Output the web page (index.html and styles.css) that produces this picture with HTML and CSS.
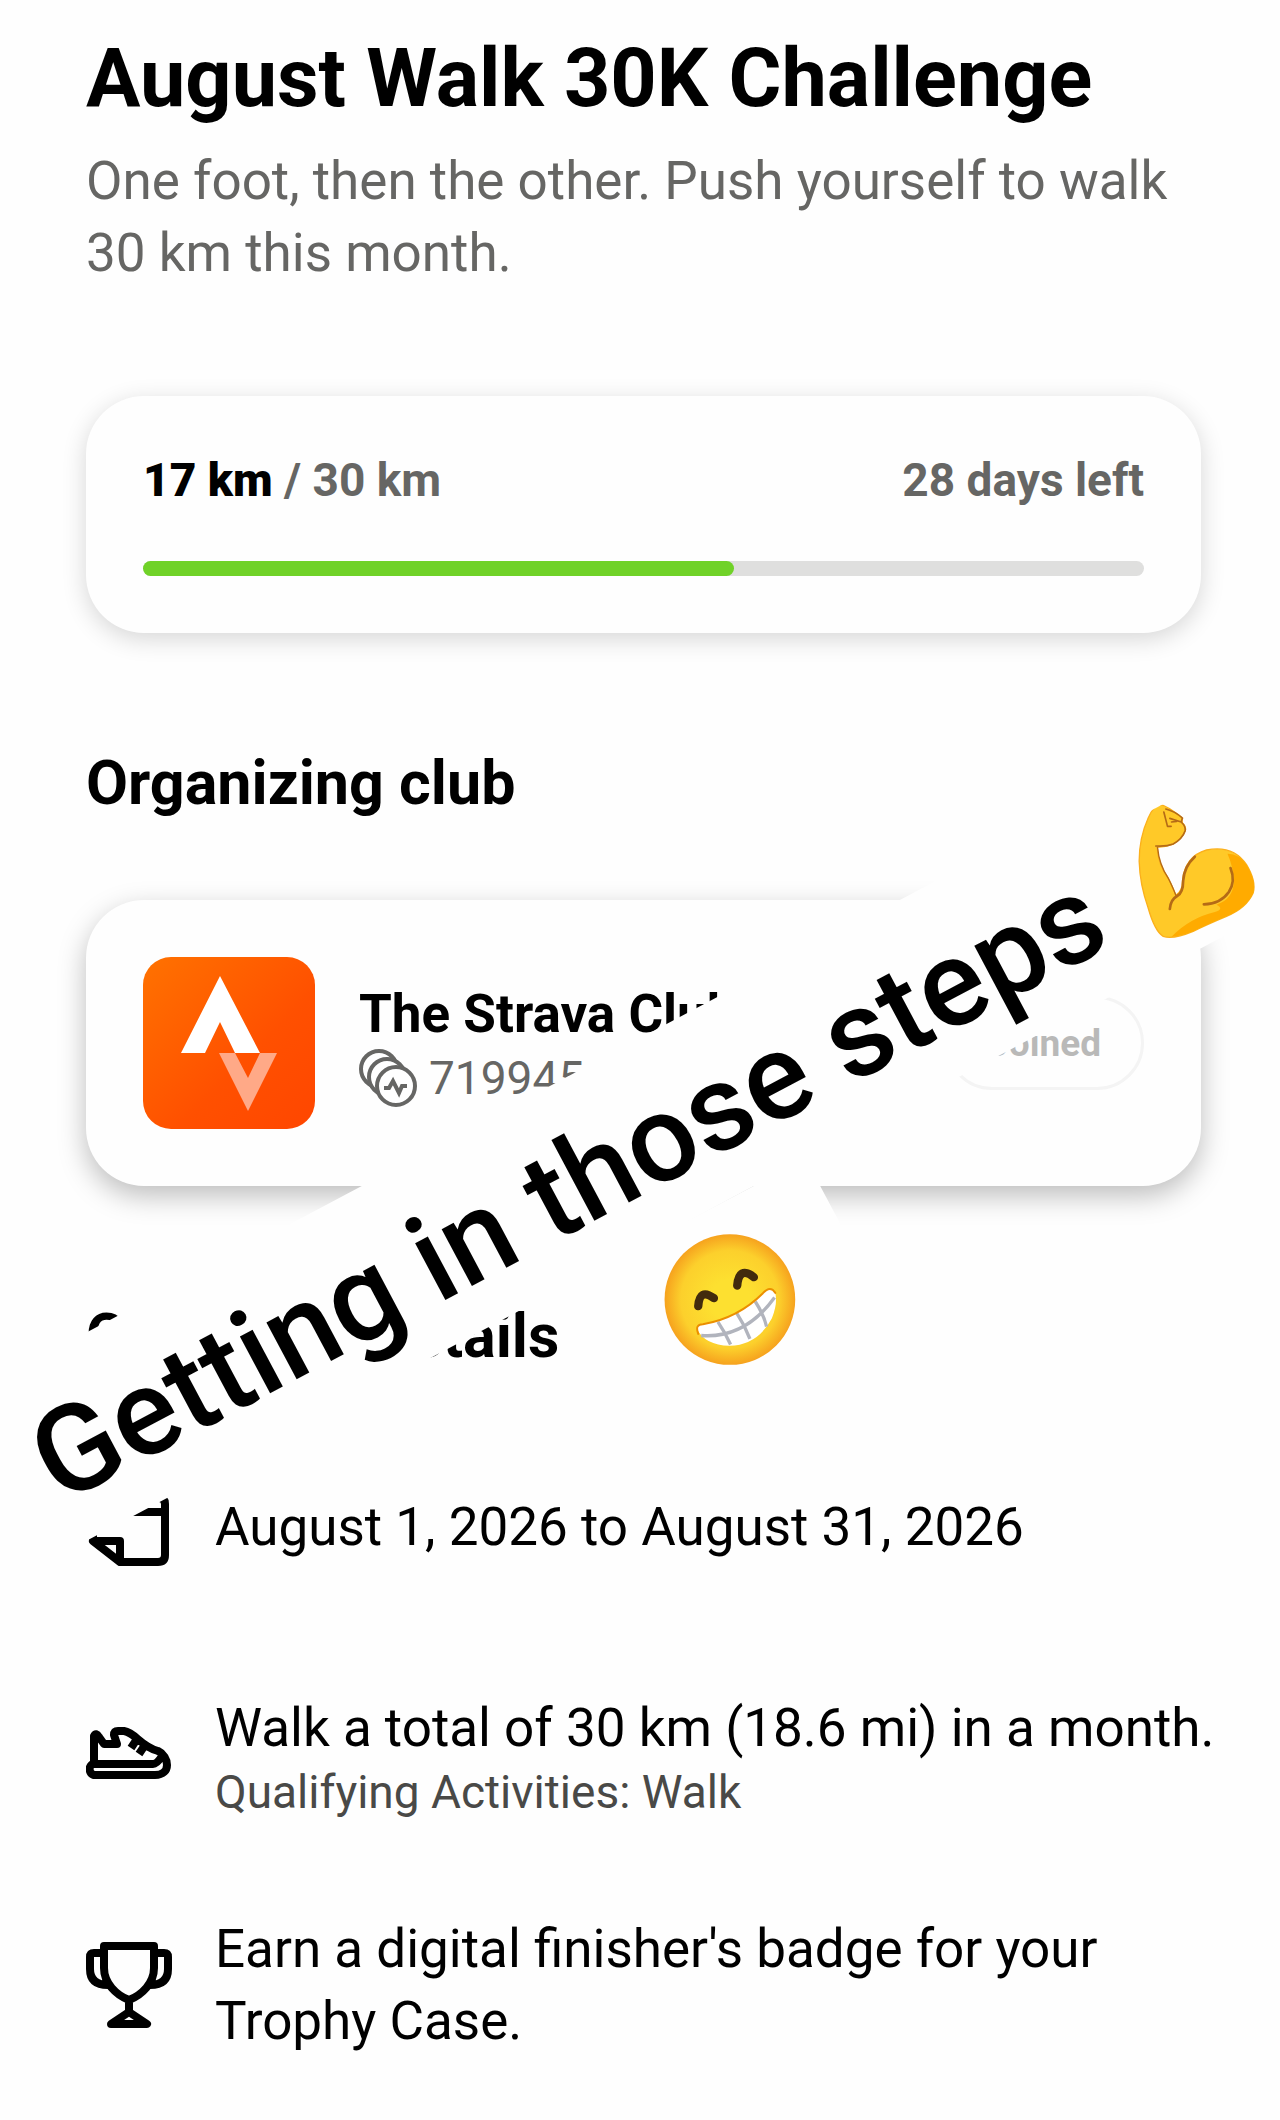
FILE: index.html
```html
<!DOCTYPE html>
<html lang="en">

<head>
    <meta charset="UTF-8">
    <meta name="viewport" content="width=device-width, initial-scale=1.0">
    <title>August Walk 30K Challenge</title>
    <link rel="stylesheet" href="styles.css">
</head>

<body>
    <main class="page">
        <h1>August Walk 30K Challenge</h1>
        <p class="intro">One foot, then the other. Push yourself to walk 30 km this month.</p>

        <section class="card progress-card">
            <div class="progress-text">
                <span><b>17 km</b> / 30 km</span>
                <span>28 days left</span>
            </div>
            <div class="bar">
                <div class="bar-fill" style="width: 59%"></div>
            </div>
        </section>

        <h2>Organizing club</h2>
        <section class="card club-card">
            <svg class="club-logo" viewBox="0 0 172 172">
                <defs>
                    <linearGradient id="orange" x1="0" y1="0" x2="1" y2="1">
                        <stop offset="0" stop-color="#ff7200" />
                        <stop offset="0.6" stop-color="#ff5000" />
                        <stop offset="1" stop-color="#ff4600" />
                    </linearGradient>
                </defs>
                <rect width="172" height="172" rx="28" fill="url(#orange)" />
                <path d="M77 19 117 96H92L77 65 62 96H38Z" fill="#fff" />
                <path d="M76 96H92L105 121 117 96H134L105 154Z" fill="#ffa987" />
            </svg>
            <div class="club-info">
                <div class="club-name">The Strava Club</div>
                <div class="club-count">
                    <svg class="members" viewBox="0 0 58 58">
                        <circle cx="20" cy="20" r="18" />
                        <circle cx="28" cy="28" r="18" />
                        <circle cx="37" cy="37" r="19" />
                        <path d="M25 39H30L34 32 40 44 43 37H48" />
                    </svg>
                    <span>7199454</span>
                </div>
            </div>
            <button class="joined" type="button" disabled>Joined</button>
        </section>

        <h2>Challenge details</h2>
        <ul class="details">
            <li>
                <svg class="icon" viewBox="0 0 86 86">
                    <path d="M7 57V20Q7 14 13 14H73Q79 14 79 20V71Q79 78 72 78H34L7 57H34V78M7 28H79M25 4V20M61 4V20" />
                </svg>
                <p>August 1, 2026 to August 31, 2026</p>
            </li>
            <li>
                <svg class="icon" viewBox="0 0 86 86">
                    <path d="M8 51V23Q10 19 13 24L18 31H31L28 22Q28 18 32 18H38C50 20 54 33 72 38C83 43 86 62 69 62H9C2 62 2 51 8 51H67Q71 51 76 43M51 26 45 35M59 32 53 41" />
                </svg>
                <div>
                    <p>Walk a total of 30 km (18.6 mi) in a month.</p>
                    <p class="note">Qualifying Activities: Walk</p>
                </div>
            </li>
            <li>
                <svg class="icon" viewBox="0 0 86 86">
                    <path d="M18 4H68V26C68 41 56 53 43 58C30 53 18 41 18 26ZM18 11H8Q4 11 4 15V27Q4 43 22 43M68 11H78Q82 11 82 15V27Q82 43 64 43M43 58V70M43 70 61 82H25Z" />
                </svg>
                <p>Earn a digital finisher's badge for your Trophy Case.</p>
            </li>
        </ul>

        <!-- caption sticker lying over the page -->
        <div class="sticker">
            <div class="sticker-line">
                <span>Getting in those steps</span>
                <svg class="emoji emoji-arm" viewBox="15 35 450 450">
                    <g transform="rotate(28 240 260)">
                        <path d="M130 60Q150 62 195 98L198 115Q210 125 206 138Q198 160 170 178Q150 186 122 188Q125 240 155 280Q170 310 178 332Q198 320 198 290Q205 215 270 196Q350 180 390 240Q420 290 410 325Q390 370 330 395Q270 420 230 440Q170 465 140 455Q115 440 95 370Q70 300 68 230Q68 160 95 100Q112 62 130 60Z" fill="#ffc928" stroke="#fbb01c" stroke-width="4" />
                        <path d="M333 207Q366 206 390 240Q420 290 410 325Q390 370 330 395Q270 420 230 440Q190 456 165 456Q220 400 295 382Q325 372 300 360Q350 345 352 290Q350 245 333 207Z" fill="#ffab00" />
                        <g fill="none" stroke="#b56b16" stroke-linecap="round" stroke-linejoin="round">
                            <path d="M148 73Q175 80 198 100L194 112 160 101M142 82 153 125H164M165 112 180 110M194 112Q208 125 206 138Q198 162 170 178Q150 186 118 184" stroke-width="5" />
                            <path d="M123 188Q128 240 155 280Q170 310 178 332" stroke-width="4" />
                            <path d="M160 373Q162 345 182 334Q200 324 200 288Q203 245 235 216" stroke-width="8" />
                            <path d="M342 250Q358 290 337 322Q312 358 262 359" stroke-width="8" />
                        </g>
                    </g>
                </svg>
            </div>
            <div class="sticker-line">
                <svg class="emoji emoji-grin" viewBox="41 69 450 450">
                    <defs>
                        <radialGradient id="face">
                            <stop offset="0.3" stop-color="#fde030" />
                            <stop offset="0.75" stop-color="#fcd02c" />
                            <stop offset="1" stop-color="#f6a21e" />
                        </radialGradient>
                    </defs>
                    <g transform="rotate(28 266 294)">
                        <circle cx="266" cy="294" r="196" fill="url(#face)" />
                        <path d="M171 314Q175 258 218 290M288 252Q293 192 338 227" fill="none" stroke="#422b0d" stroke-width="25" stroke-linecap="round" stroke-linejoin="round" />
                        <path d="M168 383Q168 368 185 368Q290 350 365 275Q385 255 400 268Q412 300 392 350Q350 430 265 433Q190 430 168 383Z" fill="#fff" />
                        <path d="M180 402Q310 412 400 288M230 361Q250 390 268 429M286 334Q310 370 326 412M342 300Q368 340 376 375" fill="none" stroke="#b1b4bd" stroke-width="10" />
                        <path d="M171 397Q160 368 185 368Q290 350 365 275Q388 250 402 274" fill="none" stroke="#eb8f00" stroke-width="6" stroke-linecap="round" />
                    </g>
                </svg>
            </div>
        </div>
    </main>
</body>

</html>
```

FILE: styles.css
```css
* {
    box-sizing: border-box;
}

body {
    margin: 0;
    background: #fefefe;
    color: #000;
    font-family: Roboto, "Liberation Sans", sans-serif;
    font-size: 53px;
    line-height: 72px;
}

.page {
    position: relative;
    overflow: hidden;
    padding: 31px 79px 20px 86px;
}

h1,
h2,
p {
    margin: 0;
}

h1 {
    font-size: 81px;
    line-height: 96px;
}

h2 {
    margin-top: 114px;
    font-size: 61px;
}

.intro {
    margin-top: 18px;
    color: #666664;
}

.card {
    background: #fefefe;
    border-radius: 58px;
    padding: 57px;
}

.progress-card {
    margin-top: 107px;
    padding-top: 60px;
    box-shadow: 0 6px 24px rgba(0, 0, 0, 0.16);
}

.progress-text {
    display: flex;
    justify-content: space-between;
    font-size: 46px;
    line-height: 48px;
    font-weight: bold;
    color: #666664;
}

.progress-text b {
    color: #000;
}

.bar {
    height: 15px;
    margin-top: 57px;
    border-radius: 8px;
    background: #dfdfde;
}

.bar-fill {
    height: 100%;
    border-radius: 8px;
    background: #70d228;
}

.club-card {
    display: flex;
    align-items: center;
    gap: 44px;
    margin-top: 81px;
    box-shadow: 0 10px 28px rgba(0, 0, 0, 0.26);
}

.club-logo {
    width: 172px;
    height: 172px;
}

.club-info {
    flex: 1;
    padding-top: 10px;
}

.club-name {
    font-size: 53px;
    line-height: 60px;
    font-weight: bold;
}

.club-count {
    display: flex;
    align-items: center;
    gap: 12px;
    font-size: 46px;
    line-height: 68px;
    color: #666664;
}

.members {
    width: 58px;
    height: 58px;
    fill: #fff;
    stroke: #666664;
    stroke-width: 4;
}

.members path {
    fill: none;
}

.joined {
    height: 94px;
    padding: 0 40px;
    border: 3px solid #f4f4f4;
    border-radius: 47px;
    background: #fefefe;
    color: #b9b9b8;
    font-family: inherit;
    font-size: 37px;
    font-weight: bold;
}

.details {
    display: grid;
    grid-auto-rows: minmax(229px, auto);
    margin: 40px -30px 0 0;
    padding: 0;
    list-style: none;
}

.details li {
    display: flex;
    align-items: center;
    gap: 43px;
}

.icon {
    flex: none;
    width: 86px;
    height: 86px;
    fill: none;
    stroke: #000;
    stroke-width: 8;
    stroke-linejoin: round;
}

.note {
    font-size: 46px;
    line-height: 56px;
    color: #494947;
}

.sticker {
    position: absolute;
    top: 1221px;
    left: 688px;
    transform: translate(-50%, -50%) rotate(-28deg);
    display: flex;
    flex-direction: column;
    align-items: center;
    font-size: 122px;
    font-weight: 500;
    white-space: nowrap;
}

.sticker-line {
    display: flex;
    align-items: center;
    gap: 32px;
    height: 184px;
    padding: 14px 40px 0;
    border-radius: 12px;
    background: #fefefe;
}

.emoji {
    width: 150px;
    height: 150px;
}

.emoji-arm {
    margin-top: 30px;
}

.emoji-grin {
    margin: 0 18px 20px;
}
```
